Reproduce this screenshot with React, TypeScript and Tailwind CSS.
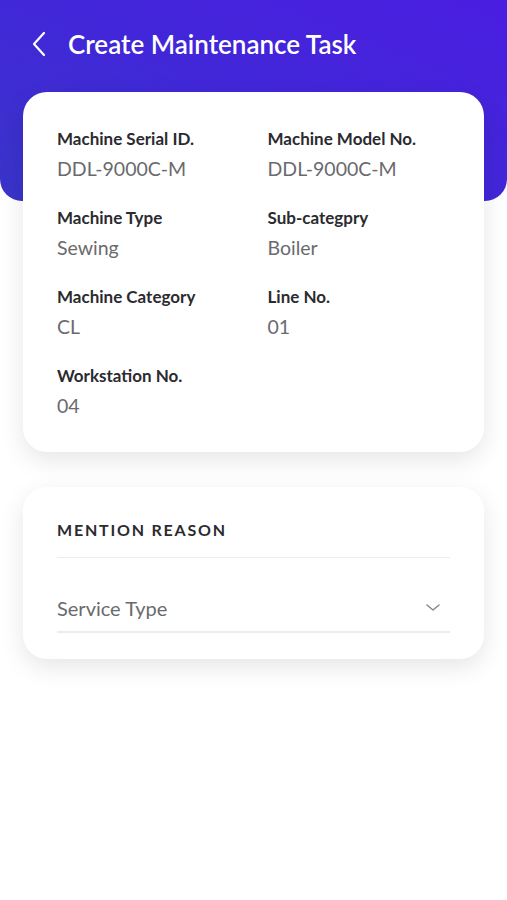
import React from "react";

const Field = ({ label, value }: { label: string; value: string }) => (
  <div className="flex flex-col">
    <span className="text-[17px] font-bold leading-[20px] text-[#2b2b2f]">{label}</span>
    <span className="mt-[9px] text-[19.5px] leading-[22px] text-[#6a6a6e]">{value}</span>
  </div>
);

export default function App() {
  return (
    <div className="relative min-h-[900px] w-[507px] bg-white" style={{ fontFamily: "Lato, 'Noto Sans', sans-serif" }}>
      <div className="absolute left-0 top-0 h-[201px] w-full rounded-b-[22px] bg-gradient-to-tr from-[#3934c9] via-[#4127d8] to-[#4b1de2]" />
      <div className="relative">
        <div className="flex h-[92px] items-center pb-[4px]">
          <svg className="ml-[31px]" width="18" height="26" viewBox="0 0 18 26" fill="none">
            <path d="M13 2 L3 13 L13 24" stroke="white" strokeWidth="2.2" strokeLinecap="round" strokeLinejoin="round" />
          </svg>
          <h1 className="ml-[19px] text-[26px] font-semibold tracking-[0px] text-white">Create Maintenance Task</h1>
        </div>
        <div className="mx-[23px] rounded-[24px] bg-white px-[34px] pb-[35px] pt-[37px] shadow-[0_8px_24px_rgba(0,0,0,0.10)]">
          <div className="grid grid-cols-2 gap-x-[28px] gap-y-[28px]">
            <Field label="Machine Serial ID." value="DDL-9000C-M" />
            <Field label="Machine Model No." value="DDL-9000C-M" />
            <Field label="Machine Type" value="Sewing" />
            <Field label="Sub-categpry" value="Boiler" />
            <Field label="Machine Category" value="CL" />
            <Field label="Line No." value="01" />
            <Field label="Workstation No." value="04" />
          </div>
        </div>
        <div className="mx-[23px] mt-[35px] rounded-[24px] bg-white px-[34px] pb-[26px] pt-[30px] shadow-[0_8px_24px_rgba(0,0,0,0.10)]">
          <div className="border-b border-[#ececec] pb-[14px] text-[16px] font-bold leading-[26px] tracking-[1.8px] text-[#2b2b2f]">
            MENTION REASON
          </div>
          <div className="mt-[38px] flex items-center justify-between border-b-2 border-[#ececec] pb-[11px]">
            <span className="text-[20px] leading-[24px] text-[#6a6a6e]">Service Type</span>
            <svg className="mr-[9px]" width="16" height="10" viewBox="0 0 16 10" fill="none">
              <path d="M2 2 L8 7 L14 2" stroke="#8a8a8e" strokeWidth="1.6" strokeLinecap="round" strokeLinejoin="round" />
            </svg>
          </div>
        </div>
      </div>
    </div>
  );
}
